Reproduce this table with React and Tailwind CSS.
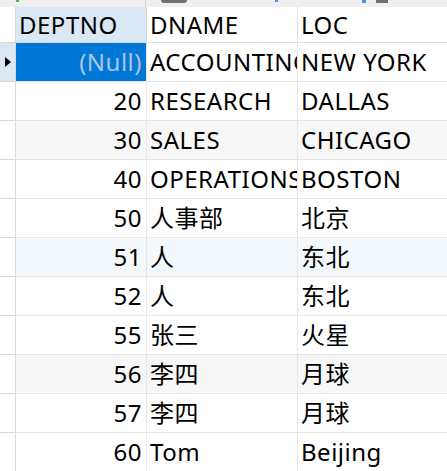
import React from "react";

const rows = [
  { no: null, name: "ACCOUNTING", loc: "NEW YORK", current: true },
  { no: "20", name: "RESEARCH", loc: "DALLAS" },
  { no: "30", name: "SALES", loc: "CHICAGO", bg: "bg-[#f7f7f7]" },
  { no: "40", name: "OPERATIONS", loc: "BOSTON" },
  { no: "50", name: "人事部", loc: "北京" },
  { no: "51", name: "人", loc: "东北", bg: "bg-[#f3f8fd]" },
  { no: "52", name: "人", loc: "东北" },
  { no: "55", name: "张三", loc: "火星" },
  { no: "56", name: "李四", loc: "月球", bg: "bg-[#f7f7f7]" },
  { no: "57", name: "李四", loc: "月球" },
  { no: "60", name: "Tom", loc: "Beijing" },
];

const font = {
  fontFamily: '"Noto Sans", "Noto Sans CJK SC", sans-serif',
};

export default function App() {
  return (
    <div
      className="w-[447px] h-[471px] overflow-hidden bg-white text-[24px] tracking-[0.5px] text-black"
      style={font}
    >
      {/* toolbar remnant strip */}
      <div className="flex h-[7px] items-start bg-[#efefef]">
        <div className="ml-[16px] h-[2px] w-[3px] bg-[#4caf50]" />
        <div className="ml-[126px] h-[7px] w-px bg-[#d6d6d6]" />
        <div className="ml-[15px] h-[3px] w-[26px] rounded-b bg-[#707070]" />
        <div className="ml-[88px] h-[2px] w-[3px] bg-[#4a90e2]" />
        <div className="ml-[84px] h-[3px] w-[4px] bg-[#4a90e2]" />
        <div className="ml-[10px] h-[3px] w-[12px] bg-[#707070]" />
      </div>

      <div className="grid grid-cols-[16px_131px_151px_1fr]">
        {/* header */}
        <div className="h-[36px] border-r border-b border-[#d8d8d8] bg-white" />
        <div className="flex h-[36px] items-center border-r border-b border-[#d8d8d8] bg-[#dae8f6] pl-[3px] leading-none">
          DEPTNO
        </div>
        <div className="flex h-[36px] items-center border-r border-b border-[#e0e0e0] pl-[3px] leading-none">
          DNAME
        </div>
        <div className="flex h-[36px] items-center border-b border-[#e0e0e0] pl-[3px] leading-none">
          LOC
        </div>

        {rows.map((r, i) => (
          <React.Fragment key={i}>
            <div
              className={`flex h-[39px] items-center justify-center border-r border-b border-[#d8d8d8] ${
                r.current ? "bg-[#dae8f6]" : "bg-white"
              }`}
            >
              {r.current && (
                <svg width="6" height="10" viewBox="0 0 6 10">
                  <path d="M0 0 L6 5 L0 10 Z" fill="#000" />
                </svg>
              )}
            </div>
            <div
              className={`flex h-[39px] items-center justify-end border-r border-b border-[#e6e6e6] pr-[4px] leading-none ${
                r.current ? "bg-[#0078d7] text-[#a9c6ea]" : r.bg || "bg-white"
              }`}
            >
              {r.no === null ? "(Null)" : r.no}
            </div>
            <div
              className={`flex h-[39px] items-center overflow-hidden whitespace-nowrap border-r border-b border-[#e6e6e6] pl-[3px] leading-none ${
                r.bg || "bg-white"
              }`}
            >
              {r.name}
            </div>
            <div
              className={`flex h-[39px] items-center whitespace-nowrap border-b border-[#e6e6e6] pl-[3px] leading-none ${
                r.bg || "bg-white"
              }`}
            >
              {r.loc}
            </div>
          </React.Fragment>
        ))}
      </div>
    </div>
  );
}
